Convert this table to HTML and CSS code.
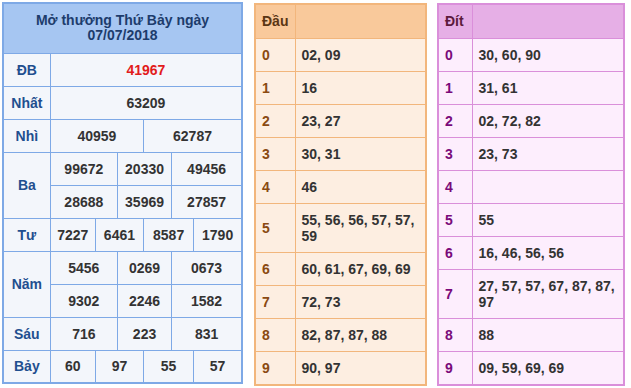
FILE: index.html
```html
<!DOCTYPE html>
<html lang="vi">
<head>
    <meta charset="UTF-8">
    <title>Kết quả xổ số 07/07/2018</title>
    <link rel="stylesheet" href="styles.css">
</head>
<body>
    <div class="wrap">
        <table class="kq">
            <colgroup>
                <col class="c-label">
                <col class="c1"><col class="c2"><col class="c3"><col class="c4"><col class="c5"><col class="c6">
            </colgroup>
            <thead>
                <tr>
                    <th colspan="7">Mở thưởng Thứ Bảy ngày<br>07/07/2018</th>
                </tr>
            </thead>
            <tbody>
                <tr>
                    <td class="label">ĐB</td>
                    <td colspan="6" class="special">41967</td>
                </tr>
                <tr>
                    <td class="label">Nhất</td>
                    <td colspan="6">63209</td>
                </tr>
                <tr>
                    <td class="label">Nhì</td>
                    <td colspan="3">40959</td>
                    <td colspan="3">62787</td>
                </tr>
                <tr>
                    <td class="label" rowspan="2">Ba</td>
                    <td colspan="2">99672</td>
                    <td colspan="2">20330</td>
                    <td colspan="2">49456</td>
                </tr>
                <tr>
                    <td colspan="2">28688</td>
                    <td colspan="2">35969</td>
                    <td colspan="2">27857</td>
                </tr>
                <tr>
                    <td class="label">Tư</td>
                    <td>7227</td>
                    <td colspan="2">6461</td>
                    <td colspan="2">8587</td>
                    <td>1790</td>
                </tr>
                <tr>
                    <td class="label" rowspan="2">Năm</td>
                    <td colspan="2">5456</td>
                    <td colspan="2">0269</td>
                    <td colspan="2">0673</td>
                </tr>
                <tr>
                    <td colspan="2">9302</td>
                    <td colspan="2">2246</td>
                    <td colspan="2">1582</td>
                </tr>
                <tr>
                    <td class="label">Sáu</td>
                    <td colspan="2">716</td>
                    <td colspan="2">223</td>
                    <td colspan="2">831</td>
                </tr>
                <tr>
                    <td class="label">Bảy</td>
                    <td>60</td>
                    <td colspan="2">97</td>
                    <td colspan="2">55</td>
                    <td>57</td>
                </tr>
            </tbody>
        </table>

        <table class="loto dau">
            <thead>
                <tr><th class="key">Đầu</th><th></th></tr>
            </thead>
            <tbody>
                <tr><td class="key">0</td><td>02, 09</td></tr>
                <tr><td class="key">1</td><td>16</td></tr>
                <tr><td class="key">2</td><td>23, 27</td></tr>
                <tr><td class="key">3</td><td>30, 31</td></tr>
                <tr><td class="key">4</td><td>46</td></tr>
                <tr><td class="key">5</td><td>55, 56, 56, 57, 57, 59</td></tr>
                <tr><td class="key">6</td><td>60, 61, 67, 69, 69</td></tr>
                <tr><td class="key">7</td><td>72, 73</td></tr>
                <tr><td class="key">8</td><td>82, 87, 87, 88</td></tr>
                <tr><td class="key">9</td><td>90, 97</td></tr>
            </tbody>
        </table>

        <table class="loto dit">
            <thead>
                <tr><th class="key">Đít</th><th></th></tr>
            </thead>
            <tbody>
                <tr><td class="key">0</td><td>30, 60, 90</td></tr>
                <tr><td class="key">1</td><td>31, 61</td></tr>
                <tr><td class="key">2</td><td>02, 72, 82</td></tr>
                <tr><td class="key">3</td><td>23, 73</td></tr>
                <tr><td class="key">4</td><td></td></tr>
                <tr><td class="key">5</td><td>55</td></tr>
                <tr><td class="key">6</td><td>16, 46, 56, 56</td></tr>
                <tr><td class="key">7</td><td>27, 57, 57, 67, 87, 87, 97</td></tr>
                <tr><td class="key">8</td><td>88</td></tr>
                <tr><td class="key">9</td><td>09, 59, 69, 69</td></tr>
            </tbody>
        </table>
    </div>
</body>
</html>
```

FILE: styles.css
```css
* {
    margin: 0;
    padding: 0;
    box-sizing: border-box;
}

body {
    background-color: #fff;
    font-family: 'Liberation Sans', Arial, sans-serif;
    font-size: 14px;
    font-weight: bold;
    color: #333;
}

.wrap {
    display: flex;
    align-items: flex-start;
    gap: 11px;
    padding: 2px 0 0 2px;
}

table {
    border-collapse: collapse;
    table-layout: fixed;
}

/* Kết quả */
.kq {
    width: 241px;
    border: 2px solid #7ea9e6;
    background-color: #f3f6fb;
}

.kq .c-label { width: 47px; }
.kq .c1 { width: 45px; }
.kq .c2 { width: 22px; }
.kq .c3 { width: 26px; }
.kq .c4 { width: 28px; }
.kq .c5 { width: 22px; }
.kq .c6 { width: 48px; }

.kq th {
    background-color: #a6c6f2;
    color: #1d3c6c;
    line-height: 15px;
    height: 50px;
    padding: 9px 2px;
    text-align: center;
    border: 1px solid #7ea9e6;
}

.kq td {
    height: 33px;
    padding: 0 2px;
    line-height: 16px;
    text-align: center;
    border: 1px solid #7ea9e6;
    white-space: nowrap;
}

.kq td.label {
    color: #1f4f8f;
}

.kq td.special {
    color: #e21b1b;
}

/* Lô tô */
.loto {
    margin-top: 1px;
    border: 2px solid;
}

.loto th,
.loto td {
    text-align: left;
    line-height: 16px;
    padding: 8px 7px 8px 6px;
    border: 1px solid;
}

.loto th {
    height: 34px;
}

.loto td {
    height: 33px;
}

.loto .key {
    width: 40px;
}

.dau {
    width: 173px;
    border-color: #f2b67c;
    background-color: #fdeee1;
}

.dau th,
.dau td {
    border-color: #f2b67c;
}

.dau th {
    background-color: #f9c99b;
    color: #5b3614;
}

.dau td.key {
    color: #8a4a12;
}

.dit {
    width: 188px;
    margin-left: -1px;
    border-color: #da8fda;
    background-color: #fdeefd;
}

.dit th,
.dit td {
    border-color: #da8fda;
}

.dit .key {
    width: 34px;
}

.dit th {
    background-color: #e6afe6;
    color: #5c1a3c;
}

.dit td.key {
    color: #7a0a7a;
}
```
